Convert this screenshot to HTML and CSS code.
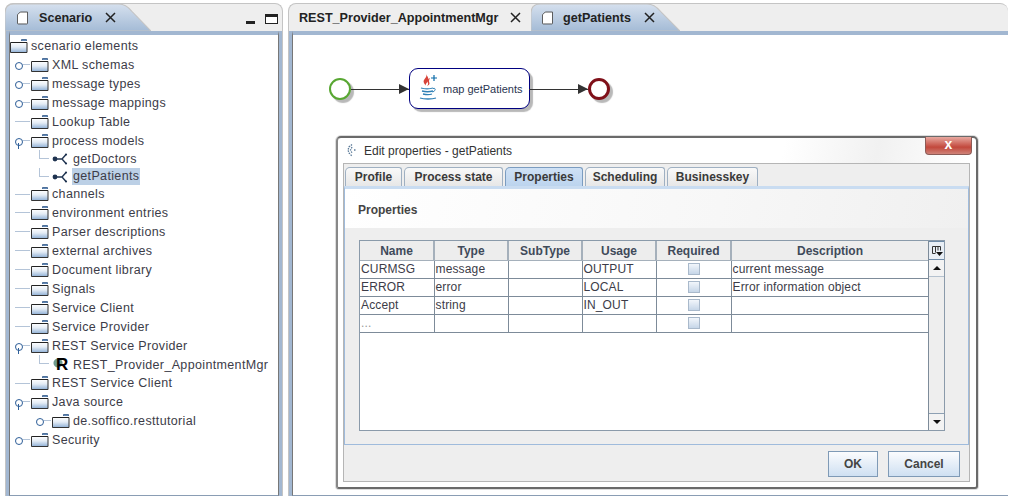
FILE: index.html
```html
<!DOCTYPE html>
<html lang="en">
<head>
<meta charset="utf-8">
<title>Scenario</title>
<link rel="stylesheet" href="styles.css">
</head>
<body>
<svg class="defs" width="0" height="0" aria-hidden="true">
  <defs>
    <linearGradient id="fold" x1="0" y1="0" x2="0" y2="1"><stop offset="0" stop-color="#fff"/><stop offset=".45" stop-color="#e4ecf5"/><stop offset="1" stop-color="#8fb0d6"/></linearGradient>
    <linearGradient id="tabg" x1="0" y1="0" x2="0" y2="1"><stop offset="0" stop-color="#d5e0ee"/><stop offset="1" stop-color="#a4bbd6"/></linearGradient>
    <symbol id="folder" viewBox="0 0 18 14">
      <path d="M11.5 2V.5h5V2" fill="#5f86b5" stroke="#4d6f99"/>
      <path d="M.5 3.5h16.5v10H.5z" fill="url(#fold)" stroke="#333"/>
      <path d="M1 3.5h16" stroke="#222"/>
    </symbol>
    <symbol id="process" viewBox="0 0 16 12">
      <circle cx="3" cy="6" r="2.4" fill="#1f3350"/>
      <path d="M3 6h7M14 1.5L10 6l4 4.5" fill="none" stroke="#1f3350" stroke-width="1.4"/>
      <circle cx="14" cy="1.5" r="1.1" fill="#1f3350"/><circle cx="14" cy="10.5" r="1.1" fill="#1f3350"/>
    </symbol>
    <symbol id="doc" viewBox="0 0 12 14">
      <path d="M3.5.5h8v12.200q0 .8-.8.8H1.300q-.8 0-.8-.8V3.500z" fill="#fff" stroke="#4a4a4a"/>
    </symbol>
    <symbol id="close" viewBox="0 0 11 11">
      <path d="M1 1l9 9M10 1l-9 9" stroke="#222" stroke-width="1.5"/>
    </symbol>
  </defs>
</svg>

<div class="workbench">
  <section class="view left-view">
    <header class="tabbar">
      <div class="tab tab-active tab-scenario">
        <svg class="tab-shape" viewBox="0 0 145 27" preserveAspectRatio="none"><path d="M0 27V10Q0 1 9 1H113Q120 1 126 8L145 27z" fill="url(#tabg)" stroke="#c4c4c4"/></svg>
        <svg class="ico-doc"><use href="#doc"/></svg>
        <span class="tab-label">Scenario</span>
        <svg class="ico-close"><use href="#close"/></svg>
      </div>
      <div class="win-controls">
        <span class="win-min"></span>
        <span class="win-max"></span>
      </div>
    </header>
    <div class="view-body tree">
      <div class="row lvl0 h19"><svg class="folder"><use href="#folder"/></svg><span>scenario elements</span></div>
      <div class="row lvl1 h19"><i class="hnd closed"></i><svg class="folder"><use href="#folder"/></svg><span>XML schemas</span></div>
      <div class="row lvl1 h19"><i class="hnd closed"></i><svg class="folder"><use href="#folder"/></svg><span>message types</span></div>
      <div class="row lvl1 h19"><i class="hnd closed"></i><svg class="folder"><use href="#folder"/></svg><span>message mappings</span></div>
      <div class="row lvl1 h19"><i class="hnd leaf"></i><svg class="folder"><use href="#folder"/></svg><span>Lookup Table</span></div>
      <div class="row lvl1 h19"><i class="hnd open"></i><svg class="folder"><use href="#folder"/></svg><span>process models</span></div>
      <div class="row lvl2 h18"><i class="elbow"></i><svg class="proc"><use href="#process"/></svg><span>getDoctors</span></div>
      <div class="row lvl2 h17"><i class="elbow"></i><svg class="proc"><use href="#process"/></svg><span class="selected">getPatients</span></div>
      <div class="row lvl1 h18"><i class="hnd leaf"></i><svg class="folder"><use href="#folder"/></svg><span>channels</span></div>
      <div class="row lvl1 h19"><i class="hnd leaf"></i><svg class="folder"><use href="#folder"/></svg><span>environment entries</span></div>
      <div class="row lvl1 h19"><i class="hnd leaf"></i><svg class="folder"><use href="#folder"/></svg><span>Parser descriptions</span></div>
      <div class="row lvl1 h19"><i class="hnd leaf"></i><svg class="folder"><use href="#folder"/></svg><span>external archives</span></div>
      <div class="row lvl1 h19"><i class="hnd leaf"></i><svg class="folder"><use href="#folder"/></svg><span>Document library</span></div>
      <div class="row lvl1 h19"><i class="hnd leaf"></i><svg class="folder"><use href="#folder"/></svg><span>Signals</span></div>
      <div class="row lvl1 h19"><i class="hnd leaf"></i><svg class="folder"><use href="#folder"/></svg><span>Service Client</span></div>
      <div class="row lvl1 h19"><i class="hnd leaf"></i><svg class="folder"><use href="#folder"/></svg><span>Service Provider</span></div>
      <div class="row lvl1 h19"><i class="hnd open"></i><svg class="folder"><use href="#folder"/></svg><span>REST Service Provider</span></div>
      <div class="row lvl2 h19"><i class="elbow"></i><span class="rest-ico"><b>R</b></span><span>REST_Provider_AppointmentMgr</span></div>
      <div class="row lvl1 h18"><i class="hnd leaf"></i><svg class="folder"><use href="#folder"/></svg><span>REST Service Client</span></div>
      <div class="row lvl1 h19"><i class="hnd open"></i><svg class="folder"><use href="#folder"/></svg><span>Java source</span></div>
      <div class="row lvl2 h19"><i class="hnd closed"></i><svg class="folder"><use href="#folder"/></svg><span>de.soffico.resttutorial</span></div>
      <div class="row lvl1 h19"><i class="hnd closed"></i><svg class="folder"><use href="#folder"/></svg><span>Security</span></div>
    </div>
  </section>

  <section class="view right-view">
    <header class="tabbar">
      <div class="tab tab-plain"><span class="tab-label">REST_Provider_AppointmentMgr</span><svg class="ico-close"><use href="#close"/></svg></div>
      <div class="tab tab-active tab-patients">
        <svg class="tab-shape" viewBox="0 0 145 27" preserveAspectRatio="none"><path d="M0 27V10Q0 1 9 1H113Q120 1 126 8L145 27z" fill="url(#tabg)" stroke="#c4c4c4"/></svg>
        <svg class="ico-doc"><use href="#doc"/></svg>
        <span class="tab-label">getPatients</span>
        <svg class="ico-close"><use href="#close"/></svg>
      </div>
    </header>
    <div class="view-body canvas">
      <div class="node start"></div>
      <div class="flow flow-a"><i></i></div>
      <div class="task">
        <svg class="java" viewBox="0 0 22 28" width="22" height="28">
          <path d="M9 1c2 4-4 5-2 9 .8 1.500 1.500 2 2 3-1-2 1-3 2-5 1-1.500.5-3-2-7z" fill="#d8443a"/>
          <path d="M13 5c-3 1.500-3 3-2 5 .5 1-.2 2-1 3 2-1 3-2 2.300-3.500-.6-1.500-.2-3 .7-4.500z" fill="#d8443a"/>
          <path d="M4 15c3 1 9 1 12 0M5 18c3 .8 8 .8 11 0M6 21c3 .6 7 .6 9 0" stroke="#2e7fb5" stroke-width="1.300" fill="none"/>
          <path d="M16 15.500c3-1 3 2.500-.5 3.500" stroke="#2e7fb5" fill="none"/>
          <path d="M3 25c4 1.300 12 1.300 16 0" stroke="#2e7fb5" stroke-width="1.300" fill="none"/>
          <path d="M14 5h6M17 2v6" stroke="#0b6aa8" stroke-width="1.200"/>
        </svg>
        <span>map getPatients</span>
      </div>
      <div class="flow flow-b"><i></i></div>
      <div class="node end"></div>
    </div>
  </section>
</div>

<div class="dialog">
  <div class="titlebar">
    <svg class="dlg-ico" viewBox="0 0 10 16" width="10" height="16"><path d="M5 1.500L2 4l-1 3 1 3 3 3M5 4L3.500 7l1.500 3M7 7h2" fill="none" stroke="#5b7a98" stroke-width="1.300" stroke-dasharray="1.500 1"/></svg>
    <span class="dlg-title">Edit properties - getPatients</span>
    <span class="dlg-close">x</span>
  </div>
  <div class="dlg-main">
    <div class="tabs2">
      <span class="t2">Profile</span>
      <span class="t2">Process state</span>
      <span class="t2 t2-on">Properties</span>
      <span class="t2">Scheduling</span>
      <span class="t2">Businesskey</span>
    </div>
    <div class="tab-page">
      <div class="page-head">Properties</div>
      <div class="page-body">
        <div class="grid-wrap">
          <div class="grid-cols">
            <table class="grid">
              <colgroup><col class="c1"><col class="c2"><col class="c3"><col class="c4"><col class="c5"><col></colgroup>
              <thead><tr><th>Name</th><th>Type</th><th>SubType</th><th>Usage</th><th>Required</th><th>Description</th></tr></thead>
              <tbody>
                <tr><td>CURMSG</td><td>message</td><td></td><td>OUTPUT</td><td class="chk"><i></i></td><td>current message</td></tr>
                <tr><td>ERROR</td><td>error</td><td></td><td>LOCAL</td><td class="chk"><i></i></td><td>Error information object</td></tr>
                <tr><td>Accept</td><td>string</td><td></td><td>IN_OUT</td><td class="chk"><i></i></td><td></td></tr>
                <tr><td class="more">...</td><td></td><td></td><td></td><td class="chk"><i></i></td><td></td></tr>
              </tbody>
            </table>
          </div>
          <div class="scroll">
            <div class="corner"><svg viewBox="0 0 12 12" width="12" height="12"><path d="M1.500 1.500h8v4M1.500 1.500v7h3M4.500 1.500v6M7 1.500v4" fill="none" stroke="#333"/><path d="M5 7h7l-3.500 4z" fill="#111"/></svg></div>
            <div class="arrow"><i class="up"></i></div>
            <div class="track"></div>
            <div class="arrow"><i class="down"></i></div>
          </div>
        </div>
      </div>
    </div>
    <div class="dlg-foot">
      <button class="btn btn-ok">OK</button>
      <button class="btn btn-cancel">Cancel</button>
    </div>
  </div>
</div>
</body>
</html>
```

FILE: styles.css
```css
* { box-sizing: border-box; }
html, body { margin: 0; height: 100%; background: #fff; overflow: hidden; }
body { font-family: "Liberation Sans", Arial, sans-serif; font-size: 12px; color: #333; position: relative; width: 1012px; height: 500px; }
.defs { position: absolute; }

.workbench { display: flex; gap: 5px; padding: 3px 4px 0 5px; height: 496px; background: #fff; }
.view { display: flex; flex-direction: column; border: 1px solid #c4c4c4; border-bottom: 0; border-radius: 8px 8px 0 0; background: #eee; }
.left-view { width: 278px; flex: none; }
.right-view { flex: 1; border-right: 0; }

.tabbar { display: flex; height: 27px; flex: none; position: relative; }
.left-view .tabbar { justify-content: space-between; }

.tab { position: relative; display: flex; align-items: center; height: 27px; font-weight: bold; color: #222; }
.tab-label { position: relative; font-size: 12.600px; }
.tab-shape { position: absolute; left: -1px; top: -1px; height: 28px; }
.tab-scenario { width: 145px; padding-left: 11px; }
.tab-scenario .tab-shape { width: 146px; }
.tab-scenario .tab-label { margin-left: 11px; width: 66px; }
.tab-plain { width: 243px; padding-left: 10px; }
.tab-plain .tab-label { width: 211px; }
.tab-patients { width: 148px; padding-left: 10px; }
.tab-patients .tab-shape { width: 149px; }
.tab-patients .tab-label { margin-left: 10px; width: 81px; }
.ico-doc { position: relative; width: 11px; height: 14px; flex: none; }
.ico-close { position: relative; width: 11px; height: 11px; flex: none; }

.win-controls { display: flex; align-items: center; gap: 10px; padding: 3px 4px 0 0; }
.win-min { width: 9px; height: 3px; margin-top: 7px; background: #222; }
.win-max { width: 13px; height: 10px; border: 1px solid #222; border-top-width: 3px; background: #fff; }

.view-body { flex: 1; background: #fff; border: 1px solid #8a9db4; min-height: 0; }
.left-view .view-body { margin: 0 3px; border-top: 4px solid #a2b7d1; box-shadow: -3px 0 0 #a2b7d1, 3px 0 0 #a2b7d1; border-left-color: #777; border-right-color: #777; }
.right-view .view-body { position: relative; margin: 0 0 0 3px; border-top: 4px solid #a2b7d1; box-shadow: -3px 0 0 #a2b7d1; border-left-color: #777; border-right: 0; }

.tree { overflow: hidden; padding-top: 1px; }
.row { position: relative; display: flex; align-items: center; white-space: nowrap; color: #3c3c48; font-size: 12.500px; letter-spacing: .35px; }
.h19 { height: 19px; }
.h18 { height: 18px; }
.h17 { height: 17px; }
.lvl1 { padding-left: 21px; }
.lvl2 { padding-left: 42px; }
.folder { width: 18px; height: 14px; flex: none; margin-right: 3px; }
.proc { width: 16px; height: 12px; flex: none; margin-right: 5px; }
.selected { background: #bcd0e6; padding: 0 1px; margin-left: -1px; line-height: 17px; }

.hnd, .elbow { position: absolute; display: block; }
.hnd { left: 5px; top: 9px; width: 15px; height: 1px; background: #b4c4d8; }
.lvl2 .hnd { left: 26px; }
.hnd.closed::before, .hnd.open::before { content: ""; position: absolute; left: 0; top: -2px; width: 6px; height: 6px; border: 1.500px solid #2f5f99; border-radius: 50%; background: #fff; }
.hnd.open::after { content: ""; position: absolute; left: 3px; top: 3px; width: 1px; height: 6px; background: #2f5f99; }
.elbow { left: 29px; top: 0; width: 10px; height: 9px; border-left: 1px solid #b4c4d8; border-bottom: 1px solid #b4c4d8; }

.rest-ico { position: relative; width: 16px; height: 16px; flex: none; margin-right: 5px; background: radial-gradient(circle at 6px 6px, #6f9a8e 0 4px, transparent 5px); }
.rest-ico b { position: absolute; left: 4px; top: -1px; font-size: 17px; line-height: 18px; color: #000; }

.canvas { overflow: hidden; }
.node { position: absolute; border-radius: 50%; box-shadow: 3px 3px 1px rgba(0,0,0,.28); background: #fff; }
.start { left: 36px; top: 43px; width: 22px; height: 22px; border: 2px solid #58a732; }
.end { left: 295px; top: 43px; width: 22px; height: 22px; border: 3px solid #7f1019; }
.flow { position: absolute; height: 1px; background: #333; }
.flow i { position: absolute; right: 0; top: -5px; border-left: 10px solid #333; border-top: 5.500px solid transparent; border-bottom: 5.500px solid transparent; }
.flow-a { left: 58px; top: 54px; width: 58px; }
.flow-b { left: 236px; top: 54px; width: 59px; }
.task { position: absolute; left: 116px; top: 33px; width: 121px; height: 41px; display: flex; align-items: center; padding-left: 7px; gap: 4px; border: 1px solid #000080; border-radius: 9px; background: #fff; box-shadow: 3px 3px 1px rgba(0,0,0,.28); font-size: 11px; color: #2a3550; }
.java { flex: none; margin-top: -4px; }
.task span { margin-top: 1px; }

.dialog { position: absolute; left: 336px; top: 136px; width: 642px; height: 353px; background: #fff; border: 2px solid #6a6a6a; border-radius: 5px 5px 3px 3px; border-left-color: #888; padding: 0 6px 5px 5px; display: flex; flex-direction: column; box-shadow: 0 0 0 1px #ddd; }
.titlebar { position: relative; height: 25px; flex: none; display: flex; align-items: center; gap: 7px; padding-left: 4px; background: linear-gradient(100deg, #fff 70%, #f1f1f1 85%, #fff); }
.dlg-title { font-size: 12px; color: #333; }
.dlg-close { position: absolute; top: -1px; right: -2px; width: 47px; height: 18px; border-radius: 0 0 4px 4px; border: 1px solid #8c5b56; border-top: 0; background: linear-gradient(#e8a9a0, #c2483c 60%, #cf8278); color: #fff; font-weight: bold; font-size: 14px; line-height: 14px; text-align: center; }
.dlg-main { flex: 1; min-height: 0; display: flex; flex-direction: column; border: 1px solid #b5b5b5; background: #eee; }

.tabs2 { display: flex; gap: 2px; height: 22px; flex: none; padding: 3px 0 0 1px; background: #eee; }
.t2 { display: block; height: 19px; padding: 2px 0 0; text-align: center; font-weight: bold; font-size: 12px; color: #3a3a3a; background: linear-gradient(#f9f9f9, #e7e7e7); border: 1px solid #9fb0c2; border-bottom: 0; border-radius: 5px 3px 0 0; }
.t2:nth-child(1) { width: 57px; }
.t2:nth-child(2) { width: 99px; }
.t2:nth-child(3) { width: 78px; }
.t2:nth-child(4) { width: 80px; }
.t2:nth-child(5) { width: 91px; }
.t2-on { background: linear-gradient(#cfe1f5, #bcd4ee); border-color: #7b9cc0; }

.tab-page { flex: 1; min-height: 0; display: flex; flex-direction: column; border: 1px solid #9fbbdc; border-width: 3px 1px 1px 1px; border-top-color: #c9dcf1; background: #eee; }
.page-head { height: 39px; flex: none; padding: 14px 0 0 13px; font-weight: bold; font-size: 12px; color: #444; background: linear-gradient(100deg, #fff, #f7f7f7 60%, #f0f0f0); }
.page-body { flex: 1; padding: 12px 23px 13px 14px; min-height: 0; }

.grid-wrap { display: flex; height: 100%; background: #fff; border: 1px solid #8a9aaa; }
.grid-cols { flex: 1; min-width: 0; }
.grid { table-layout: fixed; width: 100%; border-collapse: collapse; font-size: 12px; letter-spacing: .15px; color: #3c3c48; }
.c1, .c2, .c3, .c4 { width: 74px; }
.c5 { width: 75px; }
.grid th { height: 19px; padding: 1px 0 0; font-size: 12px; letter-spacing: 0; font-weight: bold; color: #3f4a5a; background: #ededed; border-right: 2px solid #a5b0bb; border-bottom: 1px solid #a5b0bb; }
.grid td { height: 18px; padding: 0 1px; border-right: 1px solid #7d8b99; border-bottom: 1px solid #7d8b99; white-space: nowrap; overflow: hidden; }
.grid tr > :last-child { border-right: 0; }
.chk { text-align: center; }
.chk i { display: block; width: 12px; height: 12px; margin: 0 auto; background: linear-gradient(#f2f6fb, #c6d6e8); border: 1px solid #a9b9cb; }
.more { color: #999; }

.scroll { width: 16px; flex: none; display: flex; flex-direction: column; background: #eee; border-left: 1px solid #7d8b99; }
.corner { height: 19px; flex: none; display: flex; align-items: center; justify-content: center; background: #e8eef5; border: 1px solid #6d8aa8; border-width: 1px 0 1px 0; }
.arrow { height: 17px; flex: none; display: flex; align-items: center; justify-content: center; background: #f3f3f3; border-bottom: 1px solid #b5c2cf; }
.track { flex: 1; background: #eee; }
.arrow:last-child { border-bottom: 0; border-top: 1px solid #8da0b3; }
.arrow i { display: block; border-left: 4px solid transparent; border-right: 4px solid transparent; }
.arrow .up { border-bottom: 4px solid #111; }
.arrow .down { border-top: 4px solid #111; }

.dlg-foot { height: 36px; flex: none; display: flex; justify-content: flex-end; align-items: center; gap: 10px; padding: 1px 9px 0 0; background: #eee; }
.btn { height: 26px; font: bold 12px "Liberation Sans", Arial, sans-serif; color: #444; background: linear-gradient(#fbfcfe, #cfe0f2); border: 1px solid #7f9ab6; padding: 0; }
.btn-ok { width: 50px; }
.btn-cancel { width: 72px; }
```
